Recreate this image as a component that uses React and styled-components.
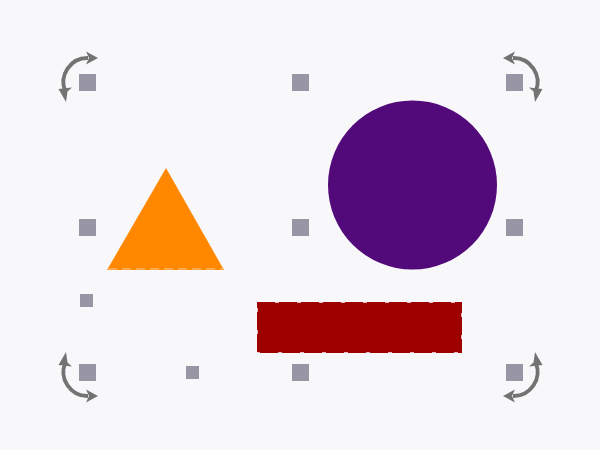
import React from "react";
import styled, { createGlobalStyle } from "styled-components";

const GlobalStyle = createGlobalStyle`
  html, body {
    margin: 0;
    padding: 0;
    background: #f8f8fb;
    font-family: "Liberation Sans", Arial, sans-serif;
  }
`;

const Canvas = styled.div`
  position: relative;
  width: 600px;
  height: 450px;
  background: #f8f8fb;
  overflow: hidden;
`;

const Shapes = styled.svg`
  position: absolute;
  left: 0;
  top: 0;
  width: 600px;
  height: 450px;
`;

// selection frame: 3x3 grid of resize handles spread over the bounding box
const Selection = styled.div`
  position: absolute;
  left: 78.5px;
  top: 73.5px;
  width: 444px;
  height: 307px;
  display: grid;
  grid-template-columns: repeat(3, 17px);
  grid-template-rows: repeat(3, 17px);
  justify-content: space-between;
  align-content: space-between;
`;

const Handle = styled.div`
  position: relative;
  width: 17px;
  height: 17px;
  background: #9896a5;
`;

const SmallHandle = styled.div`
  position: absolute;
  left: ${(p) => p.x - 6.5}px;
  top: ${(p) => p.y - 6.5}px;
  width: 13px;
  height: 13px;
  background: #9896a5;
`;

const Rotator = styled.svg`
  position: absolute;
  left: 50%;
  top: 50%;
  width: 60px;
  height: 60px;
  margin-left: -30px;
  margin-top: -30px;
  overflow: visible;
  transform: scale(${(p) => (p.$flipX ? -1 : 1)}, ${(p) => (p.$flipY ? -1 : 1)});
`;

function RotateArrow({ flipX, flipY }) {
  return (
    <Rotator viewBox="0 0 60 60" $flipX={flipX} $flipY={flipY}>
      <path
        d="M31 6 A24 24 0 0 0 8.4 39.5"
        fill="none"
        stroke="#737373"
        strokeWidth="3.8"
      />
      <path d="M29 -0.5 L41 6 L29 12.5 L32 6 Z" fill="#737373" />
      <path d="M1.5 37 L15 35.5 L10.5 39.5 L9 50 Z" fill="#737373" />
    </Rotator>
  );
}

const cells = [
  { corner: { flipX: false, flipY: false } },
  {},
  { corner: { flipX: true, flipY: false } },
  {},
  {},
  {},
  { corner: { flipX: false, flipY: true } },
  {},
  { corner: { flipX: true, flipY: true } },
];

export default function App() {
  return (
    <>
      <GlobalStyle />
      <Canvas>
        <Shapes viewBox="0 0 600 450">
          <polygon points="166,168 107,270 224,270" fill="#ff8800" />
          <line
            x1="108"
            y1="269"
            x2="223"
            y2="269"
            stroke="#ffb466"
            strokeWidth="1.5"
            strokeDasharray="9 5"
          />
          <circle cx="412.5" cy="185" r="84.5" fill="#520a7a" />
          <rect
            x="257"
            y="302"
            width="205"
            height="51"
            fill="#9e0000"
            stroke="#f8f8fb"
            strokeWidth="1.5"
            strokeDasharray="0 18 4 0"
          />
        </Shapes>
        <Selection>
          {cells.map((c, i) => (
            <Handle key={i}>{c.corner && <RotateArrow {...c.corner} />}</Handle>
          ))}
        </Selection>
        <SmallHandle x={86} y={300} />
        <SmallHandle x={192} y={372} />
      </Canvas>
    </>
  );
}
